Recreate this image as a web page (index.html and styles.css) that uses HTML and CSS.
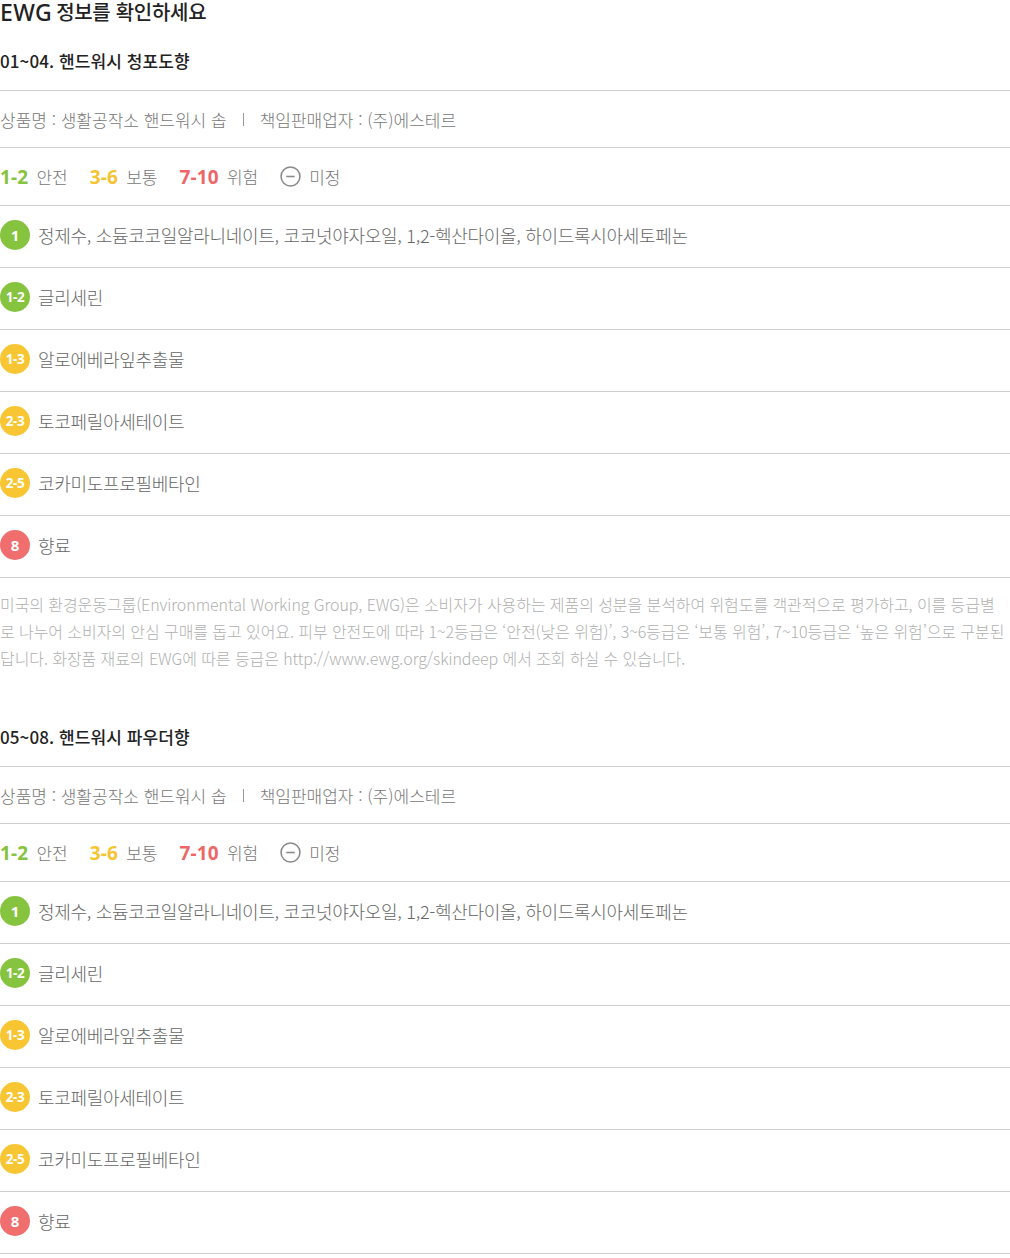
FILE: index.html
```html
<!DOCTYPE html>
<html lang="ko">
<head>
<meta charset="utf-8">
<title>EWG 정보</title>
<link rel="stylesheet" href="styles.css">
</head>
<body>
<div class="page">
  <h1 class="page-title"><span class="latin">EWG</span> 정보를 확인하세요</h1>

  <section class="product">
    <h2 class="product-title">01~04. 핸드워시 청포도향</h2>
    <div class="row info">상품명 : 생활공작소 핸드워시 솝<span class="sep"></span>책임판매업자 : (주)에스테르</div>
    <div class="row legend">
      <span class="lg"><b class="g">1-2</b>안전</span>
      <span class="lg"><b class="y">3-6</b>보통</span>
      <span class="lg"><b class="r">7-10</b>위험</span>
      <span class="lg"><svg class="minus" viewBox="0 0 20 20"><circle cx="10" cy="10" r="9" fill="none" stroke="#8a8a8a" stroke-width="1.5"/><line x1="6" y1="10" x2="14" y2="10" stroke="#8a8a8a" stroke-width="1.5"/></svg>미정</span>
    </div>
    <ul class="ingredients">
      <li class="row ing"><span class="badge g one">1</span>정제수, 소듐코코일알라니네이트, 코코넛야자오일, 1,2-헥산다이올, 하이드록시아세토페논</li>
      <li class="row ing"><span class="badge g">1-2</span>글리세린</li>
      <li class="row ing"><span class="badge y">1-3</span>알로에베라잎추출물</li>
      <li class="row ing"><span class="badge y">2-3</span>토코페릴아세테이트</li>
      <li class="row ing"><span class="badge y">2-5</span>코카미도프로필베타인</li>
      <li class="row ing"><span class="badge r one">8</span>향료</li>
    </ul>
    <p class="note">미국의 환경운동그룹(Environmental Working Group, EWG)은 소비자가 사용하는 제품의 성분을 분석하여 위험도를 객관적으로 평가하고, 이를 등급별<br>로 나누어 소비자의 안심 구매를 돕고 있어요. 피부 안전도에 따라 1~2등급은 ‘안전(낮은 위험)’, 3~6등급은 ‘보통 위험’, 7~10등급은 ‘높은 위험’으로 구분된<br>답니다. 화장품 재료의 EWG에 따른 등급은 http://www.ewg.org/skindeep 에서 조회 하실 수 있습니다.</p>
  </section>

  <section class="product second">
    <h2 class="product-title">05~08. 핸드워시 파우더향</h2>
    <div class="row info">상품명 : 생활공작소 핸드워시 솝<span class="sep"></span>책임판매업자 : (주)에스테르</div>
    <div class="row legend">
      <span class="lg"><b class="g">1-2</b>안전</span>
      <span class="lg"><b class="y">3-6</b>보통</span>
      <span class="lg"><b class="r">7-10</b>위험</span>
      <span class="lg"><svg class="minus" viewBox="0 0 20 20"><circle cx="10" cy="10" r="9" fill="none" stroke="#8a8a8a" stroke-width="1.5"/><line x1="6" y1="10" x2="14" y2="10" stroke="#8a8a8a" stroke-width="1.5"/></svg>미정</span>
    </div>
    <ul class="ingredients">
      <li class="row ing"><span class="badge g one">1</span>정제수, 소듐코코일알라니네이트, 코코넛야자오일, 1,2-헥산다이올, 하이드록시아세토페논</li>
      <li class="row ing"><span class="badge g">1-2</span>글리세린</li>
      <li class="row ing"><span class="badge y">1-3</span>알로에베라잎추출물</li>
      <li class="row ing"><span class="badge y">2-3</span>토코페릴아세테이트</li>
      <li class="row ing"><span class="badge y">2-5</span>코카미도프로필베타인</li>
      <li class="row ing"><span class="badge r one">8</span>향료</li>
    </ul>
  </section>
</div>
</body>
</html>
```
FILE: styles.css
```css
* { box-sizing: border-box; }
html, body { margin: 0; padding: 0; background: #fff; }
body {
  font-family: "Noto Sans CJK KR", "Noto Sans", sans-serif;
  color: #666;
}
.page { width: 1010px; }
.page-title {
  margin: 0;
  height: 24px;
  display: flex;
  align-items: center;
  gap: 4px;
  font-size: 20px;
  line-height: 24px;
  font-weight: 500;
  color: #222;
  letter-spacing: -0.3px;
  white-space: nowrap;
}
.page-title .latin {
  font-family: "Noto Sans", sans-serif;
  font-size: 23px;
  font-weight: 500;
  letter-spacing: 0.4px;
}
.product-title {
  margin: 25px 0 0;
  padding-bottom: 17px;
  font-size: 17px;
  line-height: 24px;
  font-weight: 500;
  color: #222;
  letter-spacing: 0.1px;
  border-bottom: 1px solid #cfcfcf;
}
.second .product-title { margin-top: 53px; }
.row {
  display: flex;
  align-items: center;
  border-bottom: 1px solid #cfcfcf;
}
.info {
  height: 57px;
  font-size: 17px;
  color: #777;
  font-weight: 300;
}
.sep {
  width: 1px;
  height: 13px;
  margin: 0 16px 0 16px;
  background: #999;
}
.legend {
  height: 58px;
  gap: 22px;
  font-size: 17px;
  color: #777;
  font-weight: 300;
}
.lg { display: flex; align-items: center; gap: 8px; }
.lg b {
  font-family: "Noto Sans", sans-serif;
  font-weight: 700;
  font-size: 19px;
  letter-spacing: 0.2px;
}
.g { color: #86c440; }
.y { color: #f5c433; }
.r { color: #ee6768; }
.minus { width: 21px; height: 21px; }
.ingredients { list-style: none; margin: 0; padding: 0; }
.ing {
  height: 62px;
  padding-bottom: 3px;
  font-size: 18px;
  color: #666;
  font-weight: 300;
  letter-spacing: -0.3px;
}
.badge {
  width: 30px;
  height: 30px;
  border-radius: 50%;
  margin-right: 8px;
  display: flex;
  align-items: center;
  justify-content: center;
  color: #fff;
  font-family: "Noto Sans", sans-serif;
  font-weight: 700;
  font-size: 13.5px;
  letter-spacing: -0.4px;
  flex: none;
}
.badge.one { font-size: 15px; letter-spacing: 0; }
.badge.g { background: #86c440; color: #fff; }
.badge.y { background: #f8c633; color: #fff; }
.badge.r { background: #f06e6e; color: #fff; }
.note {
  margin: 13px 0 0;
  font-size: 16px;
  line-height: 27px;
  color: #b0b0b0;
  font-weight: 300;
  letter-spacing: -0.08px;
  white-space: nowrap;
}
```
